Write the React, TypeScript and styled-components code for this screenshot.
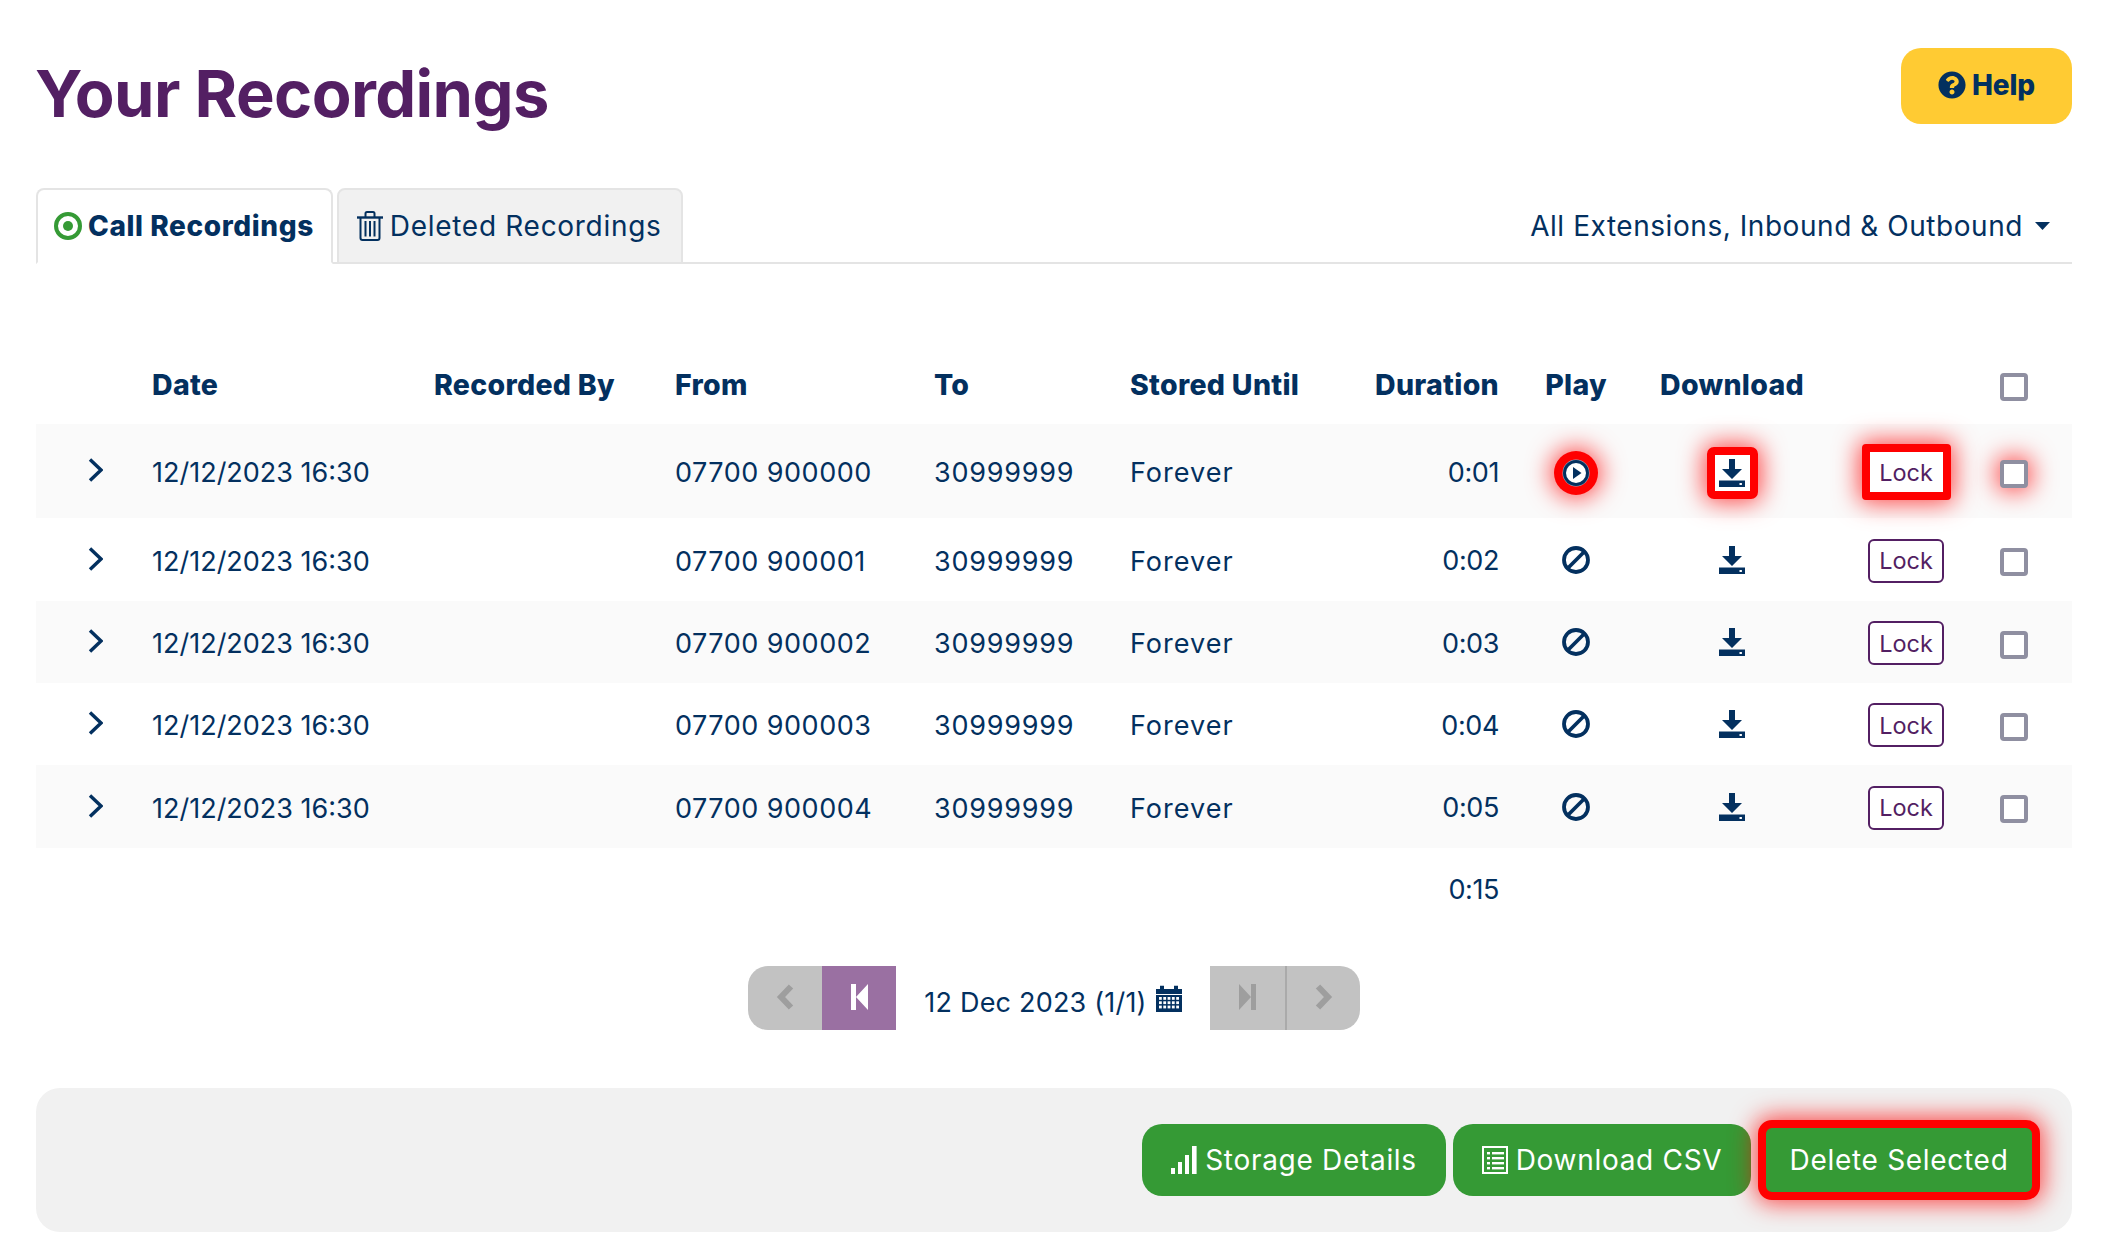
import React from "react";
import styled, { createGlobalStyle, css } from "styled-components";
import { FaQuestionCircle } from "react-icons/fa";

const NAVY = "#03305f";
const PURPLE = "#531f63";
const GREEN = "#359a35";
const GLOW = "0 0 24px 3px rgba(255,0,0,0.72)";

const Global = createGlobalStyle`
  html, body { margin: 0; padding: 0; background: #fff; }
  body { font-family: Inter, "Noto Sans", "Liberation Sans", sans-serif; color: ${NAVY}; }
  * { box-sizing: border-box; }
`;

const Page = styled.div`
  width: 2112px;
  padding: 48px 40px 25px 36px;
`;

const TopBar = styled.header`
  display: flex;
  justify-content: space-between;
  align-items: flex-start;
  height: 76px;
  margin-bottom: 64px;
`;

const Title = styled.h1`
  margin: 0 0 0 -1px;
  font-size: 65px;
  line-height: 92px;
  font-weight: 700;
  letter-spacing: -0.6px;
  color: ${PURPLE};
`;

const HelpButton = styled.button`
  display: flex;
  align-items: center;
  justify-content: center;
  gap: 6px;
  width: 171px;
  height: 76px;
  padding: 0 0 2px;
  border: none;
  border-radius: 20px;
  background: #ffcb33;
  color: ${NAVY};
  font: 800 28px Inter, sans-serif;
  letter-spacing: -0.2px;
`;

const TabBar = styled.nav`
  display: flex;
  align-items: stretch;
  gap: 4px;
  height: 76px;
  border-bottom: 2px solid #e4e4e4;
  margin-bottom: 90px;
`;

const Tab = styled.div<{ $active?: boolean }>`
  display: flex;
  align-items: center;
  gap: ${(p) => (p.$active ? 6 : 7)}px;
  height: 76px;
  padding: ${(p) => (p.$active ? "0 17px 0 16px" : "0 19px 0 18px")};
  border: 2px solid #e4e4e4;
  border-radius: 8px 8px 0 0;
  font-size: 28px;
  white-space: nowrap;
  background: ${(p) => (p.$active ? "#fff" : "#f1f1f1")};
  ${(p) =>
    p.$active
      ? css`
          border-bottom-color: #fff;
          font-weight: 800;
          letter-spacing: 0.6px;
        `
      : css`
          letter-spacing: 0.7px;
          border-bottom-color: #e4e4e4;
        `}
`;

const FilterMenu = styled.div`
  margin-left: auto;
  display: flex;
  align-items: center;
  gap: 12px;
  padding: 2px 22px 0 0;
  font-size: 28px;
  letter-spacing: 0.55px;
`;

const columns = "116px 282px 241px 259px 196px 230px 139px 154px 158px 190px 71px";

const HeadRow = styled.div`
  display: grid;
  grid-template-columns: ${columns};
  align-items: center;
  height: 70px;
  padding-bottom: 10px;
  font-size: 28.5px;
  font-weight: 800;
  letter-spacing: 0.3px;
`;

const Row = styled.div<{ $shade?: boolean; $height: number }>`
  display: grid;
  grid-template-columns: ${columns};
  align-items: center;
  height: ${(p) => p.$height}px;
  font-size: 27px;
  white-space: nowrap;
  background: ${(p) => (p.$shade ? "#fafafa" : "transparent")};
`;

const Cell = styled.div<{ $track?: number }>`
  padding-top: 3px;
  letter-spacing: ${(p) => p.$track ?? 0}px;
`;

const End = styled.div<{ $head?: boolean }>`
  grid-column: 7;
  text-align: right;
  ${(p) =>
    !p.$head &&
    css`
      padding-top: 2px;
      letter-spacing: -0.4px;
    `}
`;

const Center = styled.div<{ $col: number; $down?: number }>`
  grid-column: ${(p) => p.$col};
  display: flex;
  justify-content: center;
  align-items: center;
  margin-top: ${(p) => p.$down ?? 0}px;
`;

const Chevron = styled.div`
  display: flex;
  padding-left: 52px;
  margin-top: -2px;
`;

const PlayHalo = styled.span<{ $hot?: boolean }>`
  display: flex;
  align-items: center;
  justify-content: center;
  width: 44px;
  height: 44px;
  border-radius: 50%;
  ${(p) => p.$hot && css`background: #f00; box-shadow: ${GLOW};`}
`;

const DownloadLink = styled.span<{ $hot?: boolean }>`
  display: flex;
  align-items: center;
  justify-content: center;
  width: 51px;
  height: 52px;
  ${(p) => p.$hot && css`background: #fff; border: 8px solid #f00; border-radius: 7px; box-shadow: ${GLOW};`}
`;

const LockButton = styled.button<{ $hot?: boolean }>`
  display: flex;
  align-items: center;
  justify-content: center;
  padding: 0;
  background: #fff;
  color: ${PURPLE};
  font: 400 23.5px Inter, sans-serif;
  ${(p) =>
    p.$hot
      ? css`
          width: 89px;
          height: 56px;
          border: 8px solid #f00;
          border-radius: 4px;
          box-shadow: ${GLOW};
        `
      : css`
          width: 76px;
          height: 44px;
          border: 2px solid ${PURPLE};
          border-radius: 6px;
        `}
`;

const Check = styled.span<{ $hot?: boolean }>`
  display: block;
  width: 28px;
  height: 28px;
  margin: 5px 0 0 -1px;
  border: 4px solid #8f8fa1;
  border-radius: 4px;
  background: #fff;
  ${(p) => p.$hot && css`box-shadow: ${GLOW};`}
`;

const Pager = styled.div`
  display: flex;
  justify-content: center;
  margin: 38px 0 58px;
  height: 64px;
`;

const PagerButton = styled.div<{ $tone?: "purple" | "grey"; $side?: "left" | "right"; $rule?: boolean; $width: number }>`
  display: flex;
  align-items: center;
  justify-content: center;
  width: ${(p) => p.$width}px;
  height: 64px;
  padding-bottom: 2px;
  background: ${(p) => (p.$tone === "purple" ? "#9a70a2" : "#c2c2c2")};
  border-radius: ${(p) => (p.$side === "left" ? "20px 0 0 20px" : p.$side === "right" ? "0 20px 20px 0" : "0")};
  ${(p) => p.$rule && css`border-left: 2px solid #aaa;`}
`;

const PagerLabel = styled.div`
  display: flex;
  align-items: center;
  justify-content: center;
  gap: 9px;
  width: 314px;
  font-size: 27px;
  letter-spacing: 0.2px;
`;

const PagerText = styled.span`
  padding-top: 8px;
`;

const Footer = styled.footer`
  display: flex;
  justify-content: flex-end;
  align-items: center;
  height: 144px;
  padding-right: 32px;
  gap: 7px;
  background: #f1f1f1;
  border-radius: 24px;
`;

const ActionButton = styled.button<{ $width: number; $hot?: boolean }>`
  display: flex;
  align-items: center;
  justify-content: center;
  gap: 8px;
  width: ${(p) => p.$width}px;
  height: 72px;
  padding: 0;
  border: none;
  border-radius: 20px;
  background: ${GREEN};
  color: #fff;
  font: 400 28px Inter, sans-serif;
  letter-spacing: 0.7px;
  ${(p) =>
    p.$hot &&
    css`
      height: 80px;
      border: 8px solid #f00;
      border-radius: 14px;
      box-shadow: ${GLOW};
    `}
`;

const ChevronIcon = () => (
  <svg width="15" height="24" viewBox="0 0 15 24">
    <path d="M2 1.5 L13 12 L2 22.5" fill="none" stroke={NAVY} strokeWidth="3.4" />
  </svg>
);

const PlayIcon = () => (
  <svg width="28" height="28" viewBox="0 0 28 28">
    <circle cx="14" cy="14" r="13.5" fill="#9fb4c8" />
    <circle cx="14" cy="14" r="13" fill={NAVY} />
    <circle cx="14" cy="14" r="10" fill="#fff" />
    <path d="M11 8 L19.5 14 L11 20 Z" fill={NAVY} />
  </svg>
);

const BanIcon = () => (
  <svg width="28" height="28" viewBox="0 0 28 28">
    <circle cx="14" cy="14" r="12" fill="none" stroke={NAVY} strokeWidth="3.8" />
    <path d="M6 22 L22 6" stroke={NAVY} strokeWidth="3.8" />
  </svg>
);

const DownloadIcon = () => (
  <svg width="26" height="28" viewBox="0 0 26 28">
    <path d="M10 0 H16 V10 H23 L13 20 L3 10 H10 Z" fill={NAVY} />
    <path d="M0 21.5 H26 V28 H0 Z" fill={NAVY} />
    <rect x="20.5" y="24" width="2.4" height="2" fill="#fff" />
  </svg>
);

const DotCircleIcon = () => (
  <svg width="28" height="28" viewBox="0 0 28 28">
    <circle cx="14" cy="14" r="12" fill="none" stroke={GREEN} strokeWidth="4" />
    <circle cx="14" cy="14" r="5" fill={GREEN} />
  </svg>
);

const TrashIcon = () => (
  <svg width="26" height="30" viewBox="0 0 26 30" fill="none" stroke={NAVY} strokeWidth="2">
    <path d="M0 6.5 H26" strokeWidth="2.4" />
    <path d="M8.5 6 V2.5 Q8.5 1 10 1 H16 Q17.5 1 17.5 2.5 V6" />
    <path d="M3.5 7 V27 Q3.5 29 5.5 29 H20.5 Q22.5 29 22.5 27 V7" />
    <path d="M8.5 10 V25.5 M13 10 V25.5 M17.5 10 V25.5" />
  </svg>
);

const CaretIcon = () => (
  <svg width="15" height="8" viewBox="0 0 15 8">
    <path d="M0 0 H15 L7.5 8 Z" fill={NAVY} />
  </svg>
);

const CalendarIcon = () => (
  <svg width="26" height="27" viewBox="0 0 26 27">
    <path d="M0 4 H4 V0.8 H8 V4 H18 V0.8 H22 V4 H26 V9 H0 Z" fill={NAVY} />
    <rect x="0" y="10" width="26" height="17" fill={NAVY} />
    {[0, 1, 2].map((r) =>
      [0, 1, 2, 3, 4].map((c) => (
        <rect key={`${r}-${c}`} x={3 + c * 4.3} y={12 + r * 4.3} width="2.8" height="2.8" fill="#fff" />
      ))
    )}
  </svg>
);

const PagerChevron = ({ dir }: { dir: "left" | "right" }) => (
  <svg width="18" height="26" viewBox="0 0 18 26">
    <path
      d={dir === "left" ? "M15 2.5 L5 13 L15 23.5" : "M3 2.5 L13 13 L3 23.5"}
      fill="none"
      stroke="#9e9e9e"
      strokeWidth="6"
    />
  </svg>
);

const StepIcon = ({ dir, color }: { dir: "back" | "forward"; color: string }) => (
  <svg width="17" height="26" viewBox="0 0 17 26">
    {dir === "back" ? (
      <path d="M0 0 H5 V26 H0 Z M5 13 L17 0 V26 Z" fill={color} />
    ) : (
      <path d="M12 0 H17 V26 H12 Z M12 13 L0 0 V26 Z" fill={color} />
    )}
  </svg>
);

const SignalIcon = () => (
  <svg width="26" height="28" viewBox="0 0 26 28" fill="#fff">
    <rect x="0" y="22" width="4" height="6" />
    <rect x="7" y="16" width="4" height="12" />
    <rect x="14" y="9" width="4" height="19" />
    <rect x="21" y="0" width="4.6" height="28" />
  </svg>
);

const ListIcon = () => (
  <svg width="26" height="28" viewBox="0 0 26 28">
    <rect x="1" y="1" width="24" height="26" fill="none" stroke="#fff" strokeWidth="2" />
    {[6, 11, 16, 21].map((y) => (
      <g key={y} fill="#fff">
        <rect x="5" y={y} width="3" height="2.4" />
        <rect x="10" y={y} width="12" height="2.4" />
      </g>
    ))}
  </svg>
);

const recordings = [
  { from: "07700 900000", dur: "0:01", height: 94, shade: true, hot: true },
  { from: "07700 900001", dur: "0:02", height: 83, shade: false, hot: false },
  { from: "07700 900002", dur: "0:03", height: 82, shade: true, hot: false },
  { from: "07700 900003", dur: "0:04", height: 82, shade: false, hot: false },
  { from: "07700 900004", dur: "0:05", height: 83, shade: true, hot: false },
];

export default function App() {
  return (
    <Page>
      <Global />
      <TopBar>
        <Title>Your Recordings</Title>
        <HelpButton>
          <FaQuestionCircle size={28} />
          Help
        </HelpButton>
      </TopBar>

      <TabBar>
        <Tab $active>
          <DotCircleIcon />
          Call Recordings
        </Tab>
        <Tab>
          <TrashIcon />
          Deleted Recordings
        </Tab>
        <FilterMenu>
          All Extensions, Inbound &amp; Outbound
          <CaretIcon />
        </FilterMenu>
      </TabBar>

      <HeadRow>
        <div />
        <div>Date</div>
        <div>Recorded By</div>
        <div>From</div>
        <div>To</div>
        <div>Stored Until</div>
        <End $head>Duration</End>
        <Center $col={8}>Play</Center>
        <Center $col={9}>Download</Center>
        <div />
        <div><Check /></div>
      </HeadRow>

      {recordings.map((r) => (
        <Row key={r.from} $shade={r.shade} $height={r.height}>
          <Chevron><ChevronIcon /></Chevron>
          <Cell>12/12/2023 16:30</Cell>
          <div />
          <Cell $track={0.5}>{r.from}</Cell>
          <Cell $track={0.75}>30999999</Cell>
          <Cell $track={1}>Forever</Cell>
          <End>{r.dur}</End>
          <Center $col={8} $down={r.hot ? 4 : 0}>
            <PlayHalo $hot={r.hot}>{r.hot ? <PlayIcon /> : <BanIcon />}</PlayHalo>
          </Center>
          <Center $col={9} $down={r.hot ? 4 : 0}>
            <DownloadLink $hot={r.hot}><DownloadIcon /></DownloadLink>
          </Center>
          <Center $col={10} $down={2}>
            <LockButton $hot={r.hot}>Lock</LockButton>
          </Center>
          <div><Check $hot={r.hot} /></div>
        </Row>
      ))}

      <Row $height={80}>
        <End>0:15</End>
      </Row>

      <Pager>
        <PagerButton $side="left" $width={74}><PagerChevron dir="left" /></PagerButton>
        <PagerButton $tone="purple" $width={74}><StepIcon dir="back" color="#fff" /></PagerButton>
        <PagerLabel>
          <PagerText>12 Dec 2023 (1/1)</PagerText>
          <CalendarIcon />
        </PagerLabel>
        <PagerButton $width={75}><StepIcon dir="forward" color="#9e9e9e" /></PagerButton>
        <PagerButton $side="right" $rule $width={75}><PagerChevron dir="right" /></PagerButton>
      </Pager>

      <Footer>
        <ActionButton $width={304}><SignalIcon />Storage Details</ActionButton>
        <ActionButton $width={298}><ListIcon />Download CSV</ActionButton>
        <ActionButton $width={282} $hot>Delete Selected</ActionButton>
      </Footer>
    </Page>
  );
}
